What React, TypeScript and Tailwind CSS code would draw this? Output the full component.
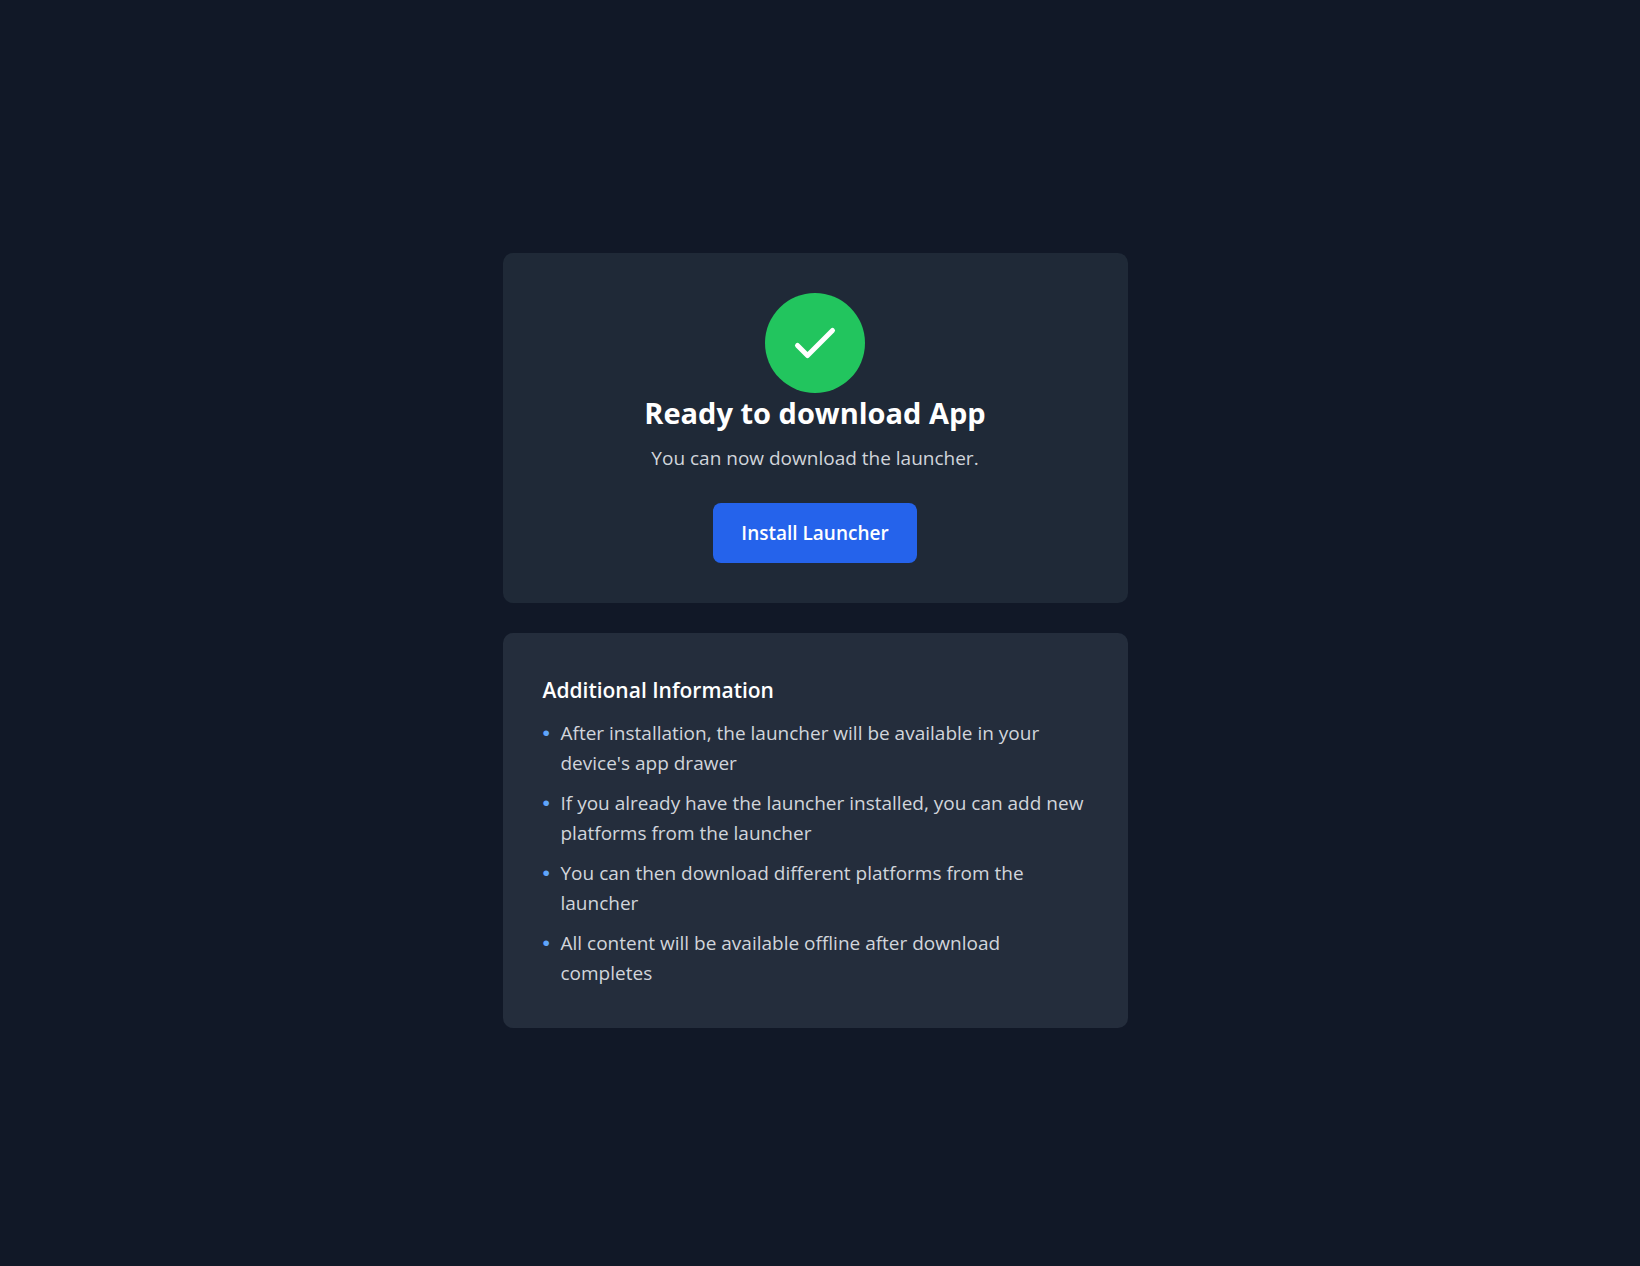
import React from "react";

const NOTES = [
  "After installation, the launcher will be available in your device's app drawer",
  "If you already have the launcher installed, you can add new platforms from the launcher",
  "You can then download different platforms from the launcher",
  "All content will be available offline after download completes",
];

/**
 * Green badge with a check mark
 */
const SuccessBadge: React.FC = () => (
  <div className="flex size-[100px] items-center justify-center rounded-full bg-[#22c55e]">
    <svg
      className="size-[60px] text-white"
      fill="none"
      stroke="currentColor"
      viewBox="0 0 24 24"
      aria-hidden="true"
    >
      <path
        strokeLinecap="round"
        strokeLinejoin="round"
        strokeWidth={2}
        d="M5 13l4 4L19 7"
      />
    </svg>
  </div>
);

const DownloadCard: React.FC = () => (
  <section className="flex flex-col items-center rounded-[10px] bg-[#1f2937] p-10 text-center">
    <SuccessBadge />
    <h1 className="text-[29px] leading-10 font-bold text-white">
      Ready to download App
    </h1>
    <p className="mt-2.5 text-[19px] leading-[30px] text-[#d1d5db]">
      You can now download the launcher.
    </p>
    <button
      type="button"
      className="mt-[30px] cursor-pointer rounded-[8px] bg-[#2563eb] px-7 py-[15px] text-[19px] leading-[30px] font-semibold text-white hover:bg-[#1d4ed8]"
    >
      Install Launcher
    </button>
  </section>
);

const InfoCard: React.FC = () => (
  <section className="rounded-[10px] bg-[#242d3c] p-10">
    <h2 className="mb-2.5 text-[21px] leading-[35px] font-semibold text-white">
      Additional Information
    </h2>
    <ul className="flex flex-col gap-2.5 text-[19px] leading-[30px] text-[#d1d5db]">
      {NOTES.map((note) => (
        <li key={note} className="flex gap-2.5">
          <span className="w-2 shrink-0 font-['Liberation_Sans',sans-serif] text-[21px] text-[#60a5fa]">
            •
          </span>
          <span>{note}</span>
        </li>
      ))}
    </ul>
  </section>
);

const App: React.FC = () => {
  return (
    <main className="flex min-h-screen items-center justify-center bg-[#111827] pt-8 pr-6 pb-[18px] pl-[14px] font-['Open_Sans','Noto_Sans',sans-serif]">
      <div className="flex w-full max-w-[625px] flex-col gap-[30px]">
        <DownloadCard />
        <InfoCard />
      </div>
    </main>
  );
};

export default App;
